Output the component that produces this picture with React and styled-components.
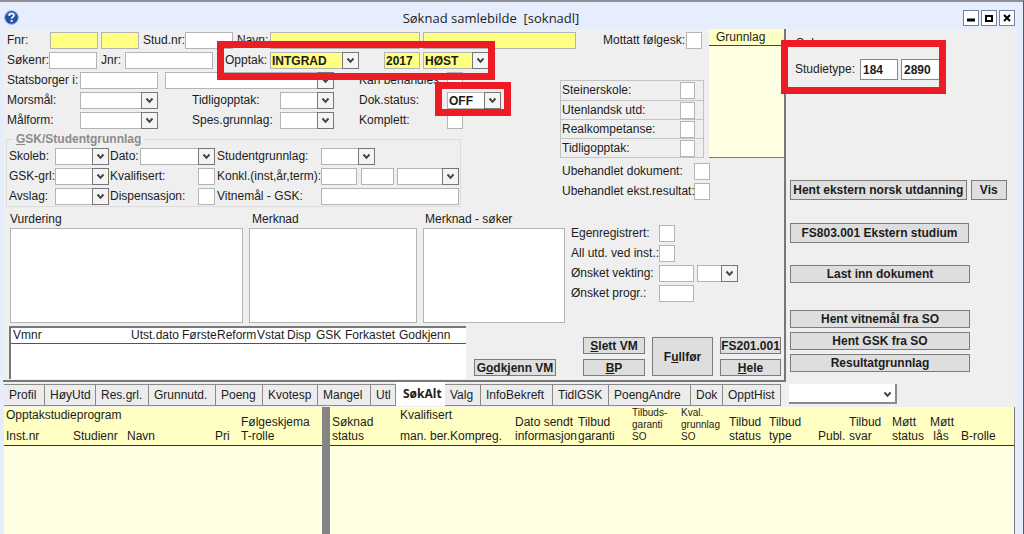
import { useId } from 'react';
import styled, { createGlobalStyle } from 'styled-components';

const GlobalStyle = createGlobalStyle`
  * {
    box-sizing: border-box;
  }

  body {
    margin: 0;
    background: #e6eefd;
    color: #1c1c1c;
    font: 12px/14px 'Liberation Sans', Arial, sans-serif;
  }

  input,
  select,
  textarea,
  button {
    margin: 0;
    border-radius: 0;
    font: inherit;
    color: inherit;
  }
`;

const Window = styled.div`
  min-height: 100vh;
  display: flex;
  flex-direction: column;
  padding: 0 8px 0 3px;
  background: #e6eefd;
  border-top: 2px solid #8d9096;
  border-right: 1px solid #4c5a6c;
  overflow: hidden;
`;

const TitleBar = styled.header`
  height: 27px;
  display: flex;
  align-items: center;
  justify-content: space-between;
  padding: 4px 0 0 1px;
`;

const Title = styled.h1`
  margin: 0;
  font: 13px/18px 'Open Sans', 'Noto Sans', sans-serif;
  white-space: pre;
`;

const WindowButtons = styled.div`
  display: flex;
  gap: 2px;
`;

const WindowButton = styled.button`
  width: 16px;
  height: 16px;
  padding: 0;
  display: grid;
  place-items: center;
  background: #fff;
  border: 1px solid #6f83a8;
`;

const Upper = styled.div`
  display: flex;
  background: #efefef;
`;

const Panel = styled.main`
  flex: none;
  width: 783px;
  display: grid;
  grid-template-columns: 553px 153px 1fr;
  grid-template-rows: 22px 108px 221px;
  border-right: 2px solid #777;
  border-bottom: 2px solid #777;
`;

const TopRow = styled.div`
  grid-column: 1 / 3;
  padding: 3px 0 0 4px;
`;

const LeftColumn = styled.div`
  grid-column: 1;
  grid-row: 2 / 4;
  display: flex;
  flex-direction: column;
`;

const Rows = styled.div`
  display: flex;
  flex-direction: column;
  gap: 3px;
  padding: ${(p) => p.$pad || '0'};
`;

const Row = styled.div`
  display: flex;
  height: 17px;
`;

const Label = styled.label`
  flex: none;
  width: ${(p) => p.$w}px;
  line-height: 17px;
  white-space: nowrap;
`;

const TextInput = styled.input`
  flex: none;
  width: ${(p) => p.$w}px;
  height: 17px;
  margin-right: ${(p) => p.$mr || 0}px;
  padding: 0 1px;
  background: ${(p) => (p.$yellow ? '#ffff80' : '#fff')};
  border: 1px solid #b4b4b4;
  font-weight: bold;
`;

const Check = styled.input.attrs({ type: 'checkbox' })`
  appearance: none;
  flex: none;
  width: ${(p) => p.$w || 16}px;
  height: 17px;
  margin-right: ${(p) => p.$mr || 0}px;
  background: #fff;
  border: 1px solid #b4b4b4;
`;

const SelectBox = styled.span`
  flex: none;
  display: grid;
  width: ${(p) => p.$w}px;
  height: 17px;
  margin-right: ${(p) => p.$mr || 0}px;

  > * {
    grid-area: 1 / 1;
  }
`;

const NativeSelect = styled.select`
  appearance: none;
  width: 100%;
  height: 17px;
  padding: 0 17px 0 1px;
  background: ${(p) => (p.$yellow ? '#ffff80' : '#fff')};
  border: 1px solid #b4b4b4;
  font-weight: bold;
`;

const Arrow = styled.span`
  justify-self: end;
  width: 17px;
  height: 17px;
  display: grid;
  place-items: center;
  background: #f4f4f4;
  border: 1px solid #777;
  pointer-events: none;
`;

const Group = styled.fieldset`
  height: 75px;
  width: 455px;
  margin: 3px 0 0 3px;
  padding: 2px 0 0 2px;
  border: 1px solid #dcdcdc;
  min-width: 0;
`;

const GroupTitle = styled.legend`
  margin-left: 4px;
  padding: 0 3px;
  color: #8c8c8c;
  font-weight: bold;
`;

const Notes = styled.div`
  display: flex;
  gap: 6px;
  margin: 5px 0 0 7px;
`;

const Note = styled.label`
  flex: none;
  width: ${(p) => p.$w}px;
  display: flex;
  flex-direction: column;
  gap: 2px;
`;

const NoteTitle = styled.span`
  padding-left: ${(p) => p.$indent || 0}px;
`;

const NoteText = styled.textarea`
  width: 100%;
  height: 95px;
  resize: none;
  background: #fff;
  border: 1px solid #b4b4b4;
`;

const DocRow = styled.div`
  display: flex;
  align-items: flex-end;
  gap: 8px;
  margin: 3px 0 0 6px;

  > button {
    margin-bottom: 3px;
  }
`;

const DocList = styled.div`
  width: 457px;
  height: 53px;
  background: #fff;
  border-top: 2px solid #777;
  border-left: 2px solid #777;
`;

const DocTable = styled.table`
  width: 100%;
  table-layout: fixed;
  border-collapse: collapse;
  border-bottom: 1px solid #555;

  th {
    height: 15px;
    padding: 0 0 0 2px;
    font-weight: normal;
    text-align: left;
    white-space: nowrap;
  }
`;

const Button = styled.button`
  width: ${(p) => (p.$w ? `${p.$w}px` : 'auto')};
  height: ${(p) => p.$h || 17}px;
  padding: 0;
  background: #dedede;
  border: 1px solid #7c7c7c;
  font-size: 12px;
  line-height: 14px;
  font-weight: bold;
  white-space: nowrap;
`;

const Flags = styled.div`
  grid-column: 2;
  grid-row: 2;
  align-self: end;
  width: 144px;
  margin: 0 0 1px 4px;
  border: 1px solid #c4c4c4;
`;

const Flag = styled.div`
  display: flex;
  justify-content: space-between;
  align-items: center;
  height: 19px;
  padding: 0 8px 0 1px;

  & + & {
    border-top: 1px solid #c4c4c4;
  }
`;

const Grunnlag = styled.section`
  grid-column: 3;
  grid-row: 1 / 3;
  height: 129px;
  background: #ffffe4;
  border-bottom: 1px solid #777;
`;

const GrunnlagTitle = styled.h2`
  margin: 0;
  height: 17px;
  padding-left: 7px;
  background: #ffffc4;
  border-bottom: 1px solid #444;
  font: inherit;
  line-height: 16px;
`;

const LowerRight = styled.div`
  grid-column: 2 / 4;
  grid-row: 3;
  display: flex;
  flex-direction: column;
  padding: 4px 0 4px 6px;
`;

const ActionGrid = styled.div`
  display: grid;
  grid-template-columns: 62px 61px 61px;
  grid-template-rows: 17px 17px;
  gap: 5px 7px;
  margin: auto 0 0 21px;

  > :nth-child(2) {
    grid-row: 1 / 3;
    grid-column: 2;
    height: auto;
  }

  > :nth-child(3) {
    grid-column: 3;
  }
`;

const Side = styled.aside`
  flex: 1;
  min-width: 0;
  display: flex;
  flex-direction: column;
  padding: 7px 8px 0 4px;
`;

const SideTitle = styled.h2`
  margin: 0 0 0 6px;
  font: inherit;
`;

const StudyType = styled.div`
  display: flex;
  gap: 3px;
  margin: 9px 0 0 5px;

  input {
    height: 21px;
    border-color: #888;
    padding-left: 2px;
  }

  label {
    line-height: 21px;
  }
`;

const SideGroup = styled.div`
  display: flex;
  flex-direction: ${(p) => (p.$row ? 'row' : 'column')};
  gap: 4px;
  margin-top: ${(p) => p.$mt}px;
`;

const TabBar = styled.nav`
  display: flex;
  align-items: flex-end;
  height: 25px;
  padding: 0 0 1px 1px;
  background: #efefef;
`;

const Tab = styled.button`
  width: ${(p) => p.$w}px;
  height: ${(p) => (p.$active ? 24 : 22)}px;
  padding: 0 0 0 ${(p) => (p.$active ? 7 : 5)}px;
  text-align: left;
  white-space: nowrap;
  background: ${(p) => (p.$active ? '#fff' : '#ececec')};
  border: 0 solid #8a8a8a;
  border-width: ${(p) => (p.$active ? '0' : '1px 1px 1px 0')};
  font-family: ${(p) => (p.$active ? "'Open Sans', sans-serif" : 'inherit')};
  font-weight: ${(p) => (p.$active ? 'bold' : 'normal')};
`;

const ViewSelect = styled.span`
  display: grid;
  align-items: center;
  width: 108px;
  height: 20px;
  margin: 0 0 2px 8px;

  > * {
    grid-area: 1 / 1;
  }

  select {
    appearance: none;
    width: 100%;
    height: 20px;
    background: #fff;
    border: 0 solid #8a8a8a;
    border-width: 0 2px 2px 0;
  }

  svg {
    justify-self: end;
    margin-right: 5px;
    pointer-events: none;
  }
`;

const Lists = styled.div`
  flex: 1;
  display: flex;
  margin-left: 1px;
  background: #ffffe4;
  border-right: 1px solid #777;
`;

const Splitter = styled.div`
  width: 8px;
  background: #848484;
`;

const ListPane = styled.div`
  flex: ${(p) => (p.$w ? 'none' : 1)};
  width: ${(p) => (p.$w ? `${p.$w}px` : 'auto')};
  min-width: 0;
`;

const ListTable = styled.table`
  width: 100%;
  table-layout: fixed;
  border-collapse: collapse;
  background: #ffffc4;
  border-bottom: 1px solid #333;

  th {
    padding: 0 0 2px 2px;
    vertical-align: bottom;
    text-align: left;
    font-weight: normal;
    white-space: pre;
  }

  tr:first-child {
    height: 17px;
  }

  tr:last-child {
    height: 21px;
  }
`;

const SmallHead = styled.span`
  display: block;
  font-size: 10px;
  line-height: 12px;
`;

const CenterHead = styled.span`
  display: block;
  width: 22px;
  text-align: center;
`;

// Red frame drawn on top of the form
const Marker = styled.div`
  position: absolute;
  left: ${(p) => p.$x}px;
  top: ${(p) => p.$y}px;
  width: ${(p) => p.$w}px;
  height: ${(p) => p.$h}px;
  border: 7px solid #ed1c24;
  pointer-events: none;
`;

function Chevron() {
  return (
    <svg width="9" height="7" viewBox="0 0 9 7" fill="none" stroke="#444" strokeWidth="2">
      <path d="M1.5 1.5 4.5 4.8 7.5 1.5" />
    </svg>
  );
}

function HelpIcon() {
  return (
    <svg width="15" height="15" viewBox="0 0 15 15" role="img" aria-label="Hjelp">
      <circle cx="7.5" cy="7.5" r="6.8" fill="#2450a4" stroke="#8fa6d4" />
      <path d="M2.5 5.5a5.4 5.4 0 0 1 10 0Q7.5 3 2.5 5.5" fill="#5f86cf" />
      <path d="M5.2 5.9c0-3.3 4.8-3 4.6-.3-.1 1.6-2.2 1.5-2.2 3.2" fill="none" stroke="#fff" strokeWidth="1.7" />
      <rect x="6.7" y="10" width="1.9" height="1.9" fill="#fff" />
    </svg>
  );
}

function Field({ label, lw, ...rest }) {
  const id = useId();
  return (
    <>
      <Label htmlFor={id} $w={lw}>{label}</Label>
      <TextInput id={id} {...rest} />
    </>
  );
}

function CheckField({ label, lw, ...rest }) {
  const id = useId();
  return (
    <>
      <Label htmlFor={id} $w={lw}>{label}</Label>
      <Check id={id} {...rest} />
    </>
  );
}

function Select({ id, name, value = '', w, mr, yellow }) {
  return (
    <SelectBox $w={w} $mr={mr}>
      <NativeSelect id={id} aria-label={name} $yellow={yellow} defaultValue={value}>
        <option>{value}</option>
      </NativeSelect>
      <Arrow><Chevron /></Arrow>
    </SelectBox>
  );
}

function SelectField({ label, lw, ...rest }) {
  const id = useId();
  return (
    <>
      <Label htmlFor={id} $w={lw}>{label}</Label>
      <Select id={id} {...rest} />
    </>
  );
}

function FlagField({ label }) {
  const id = useId();
  return (
    <Flag>
      <Label htmlFor={id}>{label}</Label>
      <Check id={id} $w={15} />
    </Flag>
  );
}

const flags = ['Steinerskole:', 'Utenlandsk utd:', 'Realkompetanse:', 'Tidligopptak:'];

const docColumns = [
  ['Vmnr', 118],
  ['Utst.dato', 51],
  ['Første', 35],
  ['Reform', 40],
  ['Vstat', 30],
  ['Disp', 29],
  ['GSK', 29],
  ['Forkastet', 54],
  ['Godkjenn', 69],
];

const tabs = [
  ['Profil', 41],
  ['HøyUtd', 51],
  ['Res.grl.', 53],
  ['Grunnutd.', 67],
  ['Poeng', 47],
  ['Kvotesp', 55],
  ['Mangel', 53],
  ['Utl', 25],
  ['SøkAlt', 49],
  ['Valg', 36],
  ['InfoBekreft', 72],
  ['TidlGSK', 56],
  ['PoengAndre', 82],
  ['Dok', 32],
  ['OpptHist', 58],
];

const programWidths = [67, 54, 88, 26, 82];
const statusWidths = [68, 50, 65, 63, 54, 49, 48, 40, 49, 31, 43, 38, 31];

function Columns({ widths }) {
  return (
    <colgroup>
      {widths.map((w, i) => <col key={i} width={w} />)}
      <col />
    </colgroup>
  );
}

export default function App() {
  return (
    <Window>
      <GlobalStyle />
      <TitleBar>
        <HelpIcon />
        <Title>{'Søknad samlebilde  [soknadl]'}</Title>
        <WindowButtons>
          <WindowButton aria-label="Minimer">
            <svg width="10" height="10"><path d="M1 7h8" stroke="#000" strokeWidth="3" /></svg>
          </WindowButton>
          <WindowButton aria-label="Maksimer">
            <svg width="10" height="10"><path d="M2 3h6v5H2z" fill="none" stroke="#000" strokeWidth="2" /></svg>
          </WindowButton>
          <WindowButton aria-label="Lukk">
            <svg width="10" height="10"><path d="m2 2 6 6M8 2 2 8" stroke="#000" strokeWidth="2" /></svg>
          </WindowButton>
        </WindowButtons>
      </TitleBar>

      <Upper>
        <Panel>
          <TopRow>
            <Row>
              <Field label="Fnr:" lw={43} $w={48} $mr={3} $yellow />
              <TextInput aria-label="Personnr" $w={38} $mr={4} $yellow />
              <Field label="Stud.nr:" lw={42} $w={48} $mr={4} />
              <Field label="Navn:" lw={33} $w={150} $mr={3} $yellow />
              <TextInput aria-label="Fornavn" $w={153} $mr={27} $yellow />
              <CheckField label="Mottatt følgesk:" lw={83} />
            </Row>
          </TopRow>

          <LeftColumn>
            <Rows $pad="1px 0 0 4px">
              <Row>
                <Field label="Søkenr:" lw={42} $w={48} $mr={4} />
                <Field label="Jnr:" lw={24} $w={88} $mr={12} />
                <SelectField label="Opptak:" lw={45} value="INTGRAD" w={89} mr={25} yellow />
                <TextInput aria-label="År" defaultValue="2017" $w={36} $mr={3} $yellow />
                <Select name="Termin" value="HØST" w={66} yellow />
              </Row>
              <Row>
                <Field label="Statsborger i:" lw={73} $w={78} $mr={7} />
                <Select name="Land" w={169} mr={25} />
                <CheckField label="Kan behandles:" lw={88} />
              </Row>
              <Row>
                <SelectField label="Morsmål:" lw={73} w={78} mr={34} />
                <SelectField label="Tidligopptak:" lw={88} w={54} mr={25} />
                <SelectField label="Dok.status:" lw={88} value="OFF" w={54} />
              </Row>
              <Row>
                <SelectField label="Målform:" lw={73} w={78} mr={34} />
                <SelectField label="Spes.grunnlag:" lw={88} w={54} mr={25} />
                <CheckField label="Komplett:" lw={88} />
              </Row>
            </Rows>

            <Group>
              <GroupTitle><u>G</u>SK/Studentgrunnlag</GroupTitle>
              <Rows>
                <Row>
                  <SelectField label="Skoleb:" lw={46} w={54} mr={1} />
                  <SelectField label="Dato:" lw={30} w={75} mr={2} />
                  <SelectField label="Studentgrunnlag:" lw={104} w={54} />
                </Row>
                <Row>
                  <SelectField label="GSK-grl:" lw={46} w={54} mr={1} />
                  <CheckField label="Kvalifisert:" lw={88} $w={17} $mr={2} />
                  <Field label="Konkl.(inst,år,term):" lw={104} $w={36} $mr={4} />
                  <TextInput aria-label="År" $w={33} $mr={3} />
                  <Select name="Termin" w={62} />
                </Row>
                <Row>
                  <SelectField label="Avslag:" lw={46} w={54} mr={1} />
                  <CheckField label="Dispensasjon:" lw={88} $w={17} $mr={2} />
                  <Field label="Vitnemål - GSK:" lw={104} $w={138} />
                </Row>
              </Rows>
            </Group>

            <Notes>
              <Note $w={233}>
                <NoteTitle>Vurdering</NoteTitle>
                <NoteText />
              </Note>
              <Note $w={168}>
                <NoteTitle $indent={3}>Merknad</NoteTitle>
                <NoteText />
              </Note>
              <Note $w={142}>
                <NoteTitle $indent={2}>Merknad - søker</NoteTitle>
                <NoteText />
              </Note>
            </Notes>

            <DocRow>
              <DocList>
                <DocTable>
                  <Columns widths={docColumns.map(([, w]) => w)} />
                  <thead>
                    <tr>
                      {docColumns.map(([name]) => <th key={name}>{name}</th>)}
                    </tr>
                  </thead>
                </DocTable>
              </DocList>
              <Button $w={85}>G<u>o</u>dkjenn VM</Button>
            </DocRow>
          </LeftColumn>

          <Flags>
            {flags.map((label) => <FlagField key={label} label={label} />)}
          </Flags>

          <Grunnlag>
            <GrunnlagTitle>Grunnlag</GrunnlagTitle>
          </Grunnlag>

          <LowerRight>
            <Rows>
              <Row>
                <CheckField label="Ubehandlet dokument:" lw={132} />
              </Row>
              <Row>
                <CheckField label="Ubehandlet ekst.resultat:" lw={132} />
              </Row>
            </Rows>
            <Rows $pad="25px 0 0 9px">
              <Row>
                <CheckField label="Egenregistrert:" lw={88} />
              </Row>
              <Row>
                <CheckField label="All utd. ved inst.:" lw={88} />
              </Row>
              <Row>
                <Field label="Ønsket vekting:" lw={88} $w={35} $mr={3} />
                <Select name="Vekting" w={41} />
              </Row>
              <Row>
                <Field label="Ønsket progr.:" lw={88} $w={35} />
              </Row>
            </Rows>
            <ActionGrid>
              <Button><u>S</u>lett VM</Button>
              <Button>F<u>u</u>llfør</Button>
              <Button>FS201.001</Button>
              <Button><u>B</u>P</Button>
              <Button><u>H</u>ele</Button>
            </ActionGrid>
          </LowerRight>
        </Panel>

        <Side>
          <SideTitle>Søker</SideTitle>
          <StudyType>
            <Field label="Studietype:" lw={62} defaultValue="184" $w={38} />
            <TextInput aria-label="Studienr" defaultValue="2890" $w={39} />
          </StudyType>
          <SideGroup $row $mt={100}>
            <Button $w={179} $h={20}>Hent ekstern norsk utdanning</Button>
            <Button $w={37} $h={20}>Vis</Button>
          </SideGroup>
          <SideGroup $mt={23}>
            <Button $w={179} $h={20}>FS803.001 Ekstern studium</Button>
          </SideGroup>
          <SideGroup $mt={22}>
            <Button $w={180} $h={18}>Last inn dokument</Button>
          </SideGroup>
          <SideGroup $mt={27}>
            <Button $w={180} $h={18}>Hent vitnemål fra SO</Button>
            <Button $w={180} $h={18}>Hent GSK fra SO</Button>
            <Button $w={180} $h={18}>Resultatgrunnlag</Button>
          </SideGroup>
        </Side>
      </Upper>

      <TabBar>
        {tabs.map(([name, w]) => (
          <Tab key={name} $w={w} $active={name === 'SøkAlt'}>{name}</Tab>
        ))}
        <ViewSelect>
          <select aria-label="Visning" />
          <Chevron />
        </ViewSelect>
      </TabBar>

      <Lists>
        <ListPane $w={318}>
          <ListTable>
            <Columns widths={programWidths} />
            <thead>
              <tr>
                <th colSpan={4}>Opptakstudieprogram</th>
                <th rowSpan={2}>{'Følgeskjema\nT-rolle'}</th>
              </tr>
              <tr>
                <th>Inst.nr</th>
                <th>Studienr</th>
                <th>Navn</th>
                <th>Pri</th>
              </tr>
            </thead>
          </ListTable>
        </ListPane>
        <Splitter />
        <ListPane>
          <ListTable>
            <Columns widths={statusWidths} />
            <thead>
              <tr>
                <th rowSpan={2}>{'Søknad\nstatus'}</th>
                <th colSpan={2}>Kvalifisert</th>
                <th rowSpan={2}>{'Dato sendt\ninformasjon'}</th>
                <th rowSpan={2}>{'Tilbud\ngaranti'}</th>
                <th rowSpan={2}><SmallHead>{'Tilbuds-\ngaranti\nSO'}</SmallHead></th>
                <th rowSpan={2}><SmallHead>{'Kval.\ngrunnlag\nSO'}</SmallHead></th>
                <th rowSpan={2}>{'Tilbud\nstatus'}</th>
                <th rowSpan={2}>{'Tilbud\ntype'}</th>
                <th rowSpan={2}>Publ.</th>
                <th rowSpan={2}>{'Tilbud\nsvar'}</th>
                <th rowSpan={2}>{'Møtt\nstatus'}</th>
                <th rowSpan={2}><CenterHead>{'Møtt\nlås'}</CenterHead></th>
                <th rowSpan={2}>B-rolle</th>
              </tr>
              <tr>
                <th>man. ber.</th>
                <th>Kompreg.</th>
              </tr>
            </thead>
          </ListTable>
        </ListPane>
      </Lists>

      <Marker $x={217} $y={41} $w={278} $h={39} />
      <Marker $x={435} $y={82} $w={76} $h={34} />
      <Marker $x={781} $y={40} $w={165} $h={54} />
    </Window>
  );
}
